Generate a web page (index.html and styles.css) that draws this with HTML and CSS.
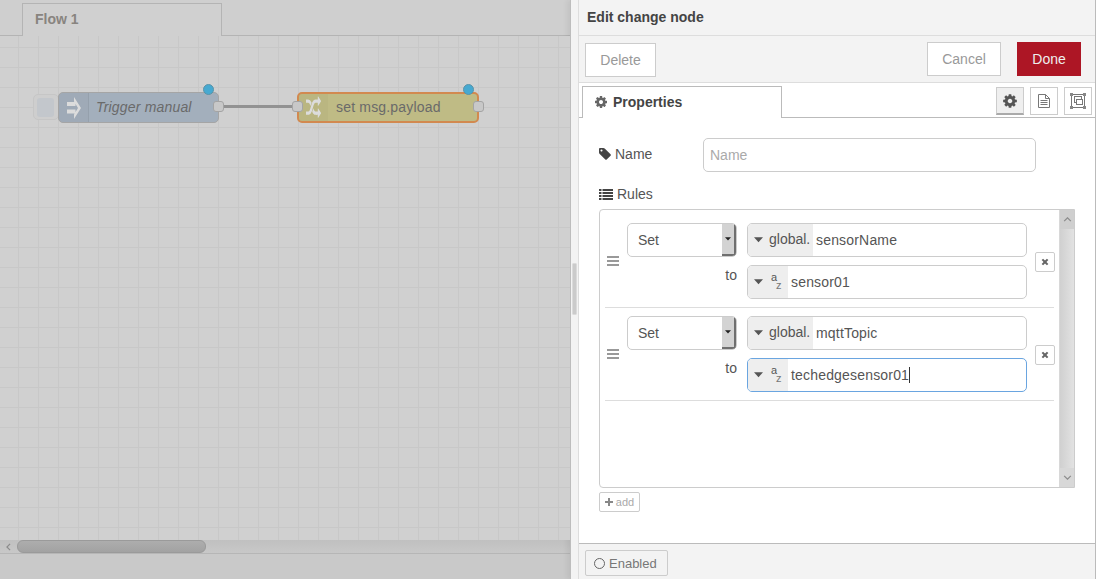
FILE: index.html
```html
<!DOCTYPE html>
<html lang="en">
<head>
<meta charset="utf-8">
<title>Edit change node</title>
<link rel="stylesheet" href="styles.css">
</head>
<body>
<svg class="defs" width="0" height="0" aria-hidden="true">
  <symbol id="i-cog" viewBox="0 0 1792 1792"><path d="M1152 896q0-106-75-181t-181-75-181 75-75 181 75 181 181 75 181-75 75-181zm512-109v222q0 12-8 23t-20 13l-185 28q-19 54-39 91 35 50 107 138 10 12 10 25t-9 23q-27 37-99 108t-94 71q-12 0-26-9l-138-108q-44 23-91 38-16 136-29 186-7 28-36 28h-222q-14 0-24.5-8.5t-11.5-21.5l-28-184q-49-16-90-37l-141 107q-10 9-25 9-14 0-25-11-126-114-165-168-7-10-7-23 0-12 8-23 15-21 51-66.5t54-70.5q-27-50-41-99l-183-27q-13-2-21-12.5t-8-23.5v-222q0-12 8-23t19-13l186-28q14-46 39-92-40-57-107-138-10-12-10-24 0-10 9-23 26-36 98.5-107.5t94.5-71.5q13 0 26 10l138 107q44-23 91-38 16-136 29-186 7-28 36-28h222q14 0 24.5 8.5t11.5 21.5l28 184q49 16 90 37l142-107q9-9 24-9 13 0 25 10 129 119 165 170 7 8 7 22 0 12-8 23-15 21-51 66.5t-54 70.5q26 50 41 98l183 28q13 2 21 12.5t8 23.5z"/></symbol>
  <symbol id="i-caret" viewBox="0 0 10 6"><path d="M0 0h10L5 5.500z"/></symbol>
  <symbol id="i-x" viewBox="0 0 10 10"><path d="M.8 2.600 2.600.8 5 3.200 7.400.8l1.800 1.800L6.800 5l2.400 2.400-1.800 1.800L5 6.800 2.600 9.200.8 7.400 3.200 5z"/></symbol>
  <symbol id="i-bars" viewBox="0 0 12 10"><path d="M0 0h12v2H0zM0 4h12v2H0zM0 8h12v2H0z"/></symbol>
</svg>

<div class="app">
  <section class="canvas">
    <div class="tabstrip">
      <div class="flowtab">Flow 1</div>
    </div>
    <div class="workspace">
      <div class="wire"></div>

      <div class="inject-btn"><span class="inject-btn-inner"></span></div>
      <div class="node node-inject">
        <span class="node-icon">
          <svg viewBox="0 0 14 22" width="14" height="22"><path class="ico-white" d="M0 5h8.500v4H0zM0 12.500h8.500v4H0zM7 0l7 11-7 11v-4.500l4-6.500-4-6.500z"/></svg>
        </span>
        <span class="node-label node-label-italic">Trigger manual</span>
      </div>
      <span class="port port-inject-out"></span>
      <span class="dot dot-inject"></span>

      <div class="node node-change">
        <span class="node-icon">
          <svg viewBox="0 0 1792 1792" width="15" height="24" preserveAspectRatio="none"><path class="ico-white" d="M666 481q-60 92-137 273-22-45-37-72.5t-40.5-63.5-51-56.5-63-35-81.5-14.500h-224q-14 0-23-9t-9-23v-192q0-14 9-23t23-9h224q250 0 410 225zm1126 799q0 14-9 23l-320 320q-9 9-23 9-13 0-22.500-9.500t-9.500-22.500v-192q-32 0-85 .5t-81 1-73-1-71-5-64-10.500-63-18.500-58-28.500-59-40-55-53.500-56-69.500q59-93 136-273 22 45 37 72.500t40.500 63.500 51 56.500 63 34.500 81.500 14h256v-192q0-14 9-23t23-9q12 0 24 10l319 319q9 9 9 23zm0-896q0 14-9 23l-320 320q-9 9-23 9-13 0-22.500-9.500t-9.500-22.500v-192h-256q-48 0-87 15t-69 45-51 61.500-45 77.500q-32 62-78 171-29 66-49.500 111t-54 105-64 100-74 83-90 68.500-106.500 42-128 16.500h-224q-14 0-23-9t-9-23v-192q0-14 9-23t23-9h224q48 0 87-15t69-45 51-61.500 45-77.500q32-62 78-171 29-66 49.500-111t54-105 64-100 74-83 90-68.500 106.500-42 128-16.500h256v-192q0-14 9-23t23-9q12 0 24 10l319 319q9 9 9 23z"/></svg>
        </span>
        <span class="node-label">set msg.payload</span>
      </div>
      <span class="port port-change-in"></span>
      <span class="port port-change-out"></span>
      <span class="dot dot-change"></span>
    </div>
    <div class="hscroll">
      <span class="hscroll-left"><svg viewBox="0 0 6 10" width="5" height="8"><path class="chev" d="M5 1 1 5l4 4"/></svg></span>
      <span class="hscroll-thumb"></span>
    </div>
    <div class="canvas-foot"></div>
  </section>

  <aside class="tray">
    <div class="tray-grip"><span class="grip-bar"></span></div>
    <div class="tray-main">
      <header class="tray-title">Edit change node</header>
      <div class="tray-actions">
        <button class="btn btn-delete">Delete</button>
        <span class="spacer"></span>
        <button class="btn btn-cancel">Cancel</button>
        <button class="btn btn-done">Done</button>
      </div>
      <div class="tray-tabs">
        <div class="prop-tab"><svg class="prop-tab-ico"><use href="#i-cog"/></svg>Properties</div>
        <span class="spacer"></span>
        <div class="side-tab side-tab-active"><svg class="side-ico-cog"><use href="#i-cog"/></svg></div>
        <div class="side-tab">
          <svg viewBox="0 0 12 14" width="12" height="14"><path class="doc" d="M.5.500h7l4 4v9H.5z"/><path class="doc" d="M7.500.500v4h4M2.500 6.500h7M2.500 8.500h7M2.500 10.500h7"/></svg>
        </div>
        <div class="side-tab">
          <svg viewBox="0 0 16 16" width="16" height="16"><rect class="doc" x="1.500" y="1.500" width="13" height="13"/><rect class="doc" x="4.500" y="3.500" width="7" height="6"/><rect class="doc doc-fill" x="6.500" y="6.500" width="6" height="5"/><path class="corner" d="M0 0h3v3H0zM13 0h3v3h-3zM0 13h3v3H0zM13 13h3v3h-3z"/></svg>
        </div>
      </div>

      <div class="tray-body">
        <div class="form-row">
          <label class="form-label form-label-name">
            <svg class="lbl-ico lbl-ico-tag" viewBox="0 0 1792 1792"><path d="M576 448q0-53-37.500-90.500t-90.500-37.500-90.500 37.500-37.500 90.500 37.500 90.500 90.500 37.500 90.500-37.500 37.500-90.500zm1067 576q0 53-37 90l-491 492q-39 37-91 37-53 0-90-37l-715-716q-38-37-64.500-101t-26.500-117v-416q0-52 38-90t90-38h416q53 0 117 26.500t102 64.500l715 714q37 39 37 91z"/></svg>Name
          </label>
          <input class="name-input" type="text" placeholder="Name">
        </div>
        <div class="rules-label">
          <svg class="lbl-ico lbl-ico-list" viewBox="0 0 14 11"><path d="M0 0h2.500v2H0zM3.500 0H14v2H3.500zM0 3h2.500v2H0zM3.500 3H14v2H3.500zM0 6h2.500v2H0zM3.500 6H14v2H3.500zM0 9h2.500v2H0zM3.500 9H14v2H3.500z"/></svg>Rules
        </div>
        <div class="rules-box">
          <div class="rules-list">
            <div class="rule">
              <svg class="rule-handle"><use href="#i-bars"/></svg>
              <div class="rule-main">
                <div class="rule-line">
                  <div class="sel"><span class="sel-text">Set</span><span class="sel-btn"><svg class="sel-caret"><use href="#i-caret"/></svg></span></div>
                  <div class="typed">
                    <span class="typed-type"><svg class="typed-caret"><use href="#i-caret"/></svg>global.</span>
                    <span class="typed-value typed-value-g">sensorName</span>
                  </div>
                </div>
                <div class="rule-line">
                  <span class="rule-to">to</span>
                  <div class="typed">
                    <span class="typed-type typed-type-s"><svg class="typed-caret"><use href="#i-caret"/></svg><span class="az"><span class="az-a">a</span><span class="az-z">z</span></span></span>
                    <span class="typed-value">sensor01</span>
                  </div>
                </div>
              </div>
              <button class="rule-del"><svg class="rule-del-ico"><use href="#i-x"/></svg></button>
            </div>
            <div class="rule">
              <svg class="rule-handle"><use href="#i-bars"/></svg>
              <div class="rule-main">
                <div class="rule-line">
                  <div class="sel"><span class="sel-text">Set</span><span class="sel-btn"><svg class="sel-caret"><use href="#i-caret"/></svg></span></div>
                  <div class="typed">
                    <span class="typed-type"><svg class="typed-caret"><use href="#i-caret"/></svg>global.</span>
                    <span class="typed-value typed-value-g">mqttTopic</span>
                  </div>
                </div>
                <div class="rule-line">
                  <span class="rule-to">to</span>
                  <div class="typed typed-focus">
                    <span class="typed-type typed-type-s"><svg class="typed-caret"><use href="#i-caret"/></svg><span class="az"><span class="az-a">a</span><span class="az-z">z</span></span></span>
                    <span class="typed-value">techedgesensor01<span class="cursor"></span></span>
                  </div>
                </div>
              </div>
              <button class="rule-del"><svg class="rule-del-ico"><use href="#i-x"/></svg></button>
            </div>
          </div>
          <div class="vscroll">
            <span class="vscroll-btn"><svg viewBox="0 0 10 6" width="9" height="5"><path class="chev" d="m1 5 4-4 4 4"/></svg></span>
            <span class="vscroll-track"></span>
            <span class="vscroll-btn vscroll-btn-low"><svg viewBox="0 0 10 6" width="9" height="5"><path class="chev" d="m1 1 4 4 4-4"/></svg></span>
          </div>
        </div>
        <button class="add-btn"><svg viewBox="0 0 8 8" width="8" height="8"><path class="add-plus" d="M3 0h2v3h3v2H5v3H3V5H0V3h3z"/></svg>add</button>
      </div>

      <footer class="tray-foot">
        <button class="enabled-btn"><span class="ring"></span>Enabled</button>
      </footer>
    </div>
  </aside>
</div>
</body>
</html>
```
FILE: styles.css
```css
* { box-sizing: border-box; }
html, body { margin: 0; padding: 0; height: 100%; }
body {
  background: #fff;
  font-family: "Liberation Sans", Arial, sans-serif;
  font-size: 14px;
  color: #555;
  overflow: hidden;
}
button { font-family: inherit; }
.defs { position: absolute; }
.spacer { flex: 1; }

.app { display: flex; width: 1097px; height: 579px; }

/* Dimmed canvas */
.canvas {
  width: 570px;
  flex: none;
  display: flex;
  flex-direction: column;
  background: #cbcbcb;
  overflow: hidden;
}
.tabstrip {
  height: 36px;
  flex: none;
  background: #cfcfcf;
  border-bottom: 1px solid #b4b4b4;
  padding: 3px 0 0 22px;
}
.flowtab {
  width: 200px;
  height: 33px;
  background: #d0d0d0;
  border: 1px solid #b4b4b4;
  border-bottom: 0;
  padding: 0 0 0 12px;
  line-height: 31px;
  font-weight: bold;
  color: #88847f;
}
.workspace {
  position: relative;
  flex: 1;
  background-color: #d0d0d0;
  background-image:
    linear-gradient(to right, #c8c8c8 1px, transparent 1px),
    linear-gradient(to bottom, #c8c8c8 1px, transparent 1px);
  background-size: 20px 20px;
  background-position: 18px 11px;
}
.wire {
  position: absolute;
  left: 218px;
  top: 69px;
  width: 80px;
  height: 3px;
  background: #929292;
}
.inject-btn {
  position: absolute;
  left: 33px;
  top: 58px;
  width: 26px;
  height: 26px;
  border: 1px solid #c6c6c6;
  border-radius: 5px;
  padding: 3px 0 0 3px;
  background: #cecece;
}
.inject-btn-inner {
  display: block;
  width: 17px;
  height: 19px;
  background: #c3c7cc;
  border-radius: 3px;
}
.node {
  position: absolute;
  top: 56px;
  height: 31px;
  display: flex;
  align-items: center;
  border-radius: 5px;
  overflow: hidden;
}
.node-inject {
  left: 58px;
  width: 161px;
  background: #a3afbc;
  border: 1px solid #a5a5a5;
}
.node-change {
  left: 297px;
  width: 182px;
  background: #bfbb85;
  border: 2px solid #d2894f;
}
.node-icon {
  width: 30px;
  height: 100%;
  flex: none;
  display: flex;
  align-items: center;
  justify-content: center;
  background: rgba(0, 0, 0, 0.025);
  border-right: 1px solid rgba(0, 0, 0, 0.06);
}
.node-change .node-icon { width: 29px; border-right: 0; }
.ico-white { fill: #dcdcdc; }
.node-label {
  padding: 0 0 2px 7px;
  color: #6a6a6a;
  white-space: nowrap;
  letter-spacing: 0.18px;
}
.node-change .node-label { padding-left: 8px; }
.node-label-italic { font-style: italic; }
.port {
  position: absolute;
  top: 65px;
  width: 11px;
  height: 11px;
  background: #c8c8c8;
  border: 1px solid #a4a4a4;
  border-radius: 3px;
}
.port-inject-out { left: 213px; }
.port-change-in { left: 292px; }
.port-change-out { left: 473px; }
.dot {
  position: absolute;
  top: 48px;
  width: 11px;
  height: 11px;
  border-radius: 50%;
  background: #46a9d1;
  border: 1px solid #5a93a8;
}
.dot-inject { left: 203px; }
.dot-change { left: 463px; }

.hscroll {
  height: 14px;
  flex: none;
  display: flex;
  align-items: center;
  background: linear-gradient(#c0c0c0, #c8c8c8);
  border-bottom: 1px solid #b6b6b6;
}
.hscroll-left { width: 17px; display: flex; justify-content: center; }
.hscroll-thumb {
  width: 189px;
  height: 13px;
  background: linear-gradient(#adadad, #a2a2a2);
  border: 1px solid #9a9a9a;
  border-radius: 6px;
}
.chev { fill: none; stroke: #8c8c8c; stroke-width: 1.500; }
.canvas-foot { height: 25px; flex: none; background: #c9c9c9; }

/* Tray */
.tray {
  flex: 1;
  display: flex;
  min-width: 0;
  border-left: 1px solid #bdbdbd;
  padding-right: 1px;
  background: #fff;
  box-shadow: -3px 0 5px rgba(0, 0, 0, 0.06);
}
.tray-grip {
  width: 8px;
  flex: none;
  display: flex;
  align-items: center;
  background: #f3f3f3;
  padding-left: 2px;
  border-right: 1px solid #ddd;
}
.grip-bar {
  width: 3px;
  height: 50px;
  margin-bottom: 1px;
  background: #cbcbcb;
  box-shadow: 0 0 0 0.5px #c4c4c4;
}
.tray-main {
  flex: 1;
  min-width: 0;
  display: flex;
  flex-direction: column;
  border-right: 1px solid #bbb;
}
.tray-title {
  height: 36px;
  flex: none;
  background: #f3f3f3;
  border-bottom: 1px solid #ddd;
  padding: 0 0 0 8px;
  line-height: 35px;
  font-weight: bold;
  color: #444;
}
.tray-actions {
  height: 47px;
  flex: none;
  display: flex;
  align-items: flex-start;
  background: #f3f3f3;
  border-bottom: 1px solid #ddd;
  padding: 6px 14px 0 6px;
}
.btn {
  height: 34px;
  border: 1px solid #ccc;
  background: #fff;
  color: #999;
  font-size: 14px;
  padding: 0;
}
.btn-delete { width: 71px; margin-top: 1px; }
.btn-cancel { width: 74px; margin-right: 16px; }
.btn-done { width: 64px; background: #ad1625; border-color: #ad1625; color: #eee; }

.tray-tabs {
  height: 35px;
  flex: none;
  display: flex;
  align-items: flex-start;
  background: #fff;
  border-bottom: 1px solid #bbb;
  padding: 3px 3px 0 3px;
}
.prop-tab {
  width: 200px;
  height: 32px;
  display: flex;
  align-items: center;
  gap: 5px;
  padding: 0 0 2px 11px;
  background: #fff;
  border: 1px solid #bbb;
  border-bottom: 0;
  font-weight: bold;
  color: #444;
  margin-bottom: -1px;
}
.prop-tab-ico { width: 14px; height: 14px; fill: #666; }
.side-tab {
  width: 28px;
  height: 28px;
  margin: 1px 0 0 6px;
  flex: none;
  display: flex;
  align-items: center;
  justify-content: center;
  border: 1px solid #ccc;
  background: #fff;
}
.side-tab-active {
  margin-left: 0;
  background: #efefef;
  border-bottom: 2px solid #aaa;
}
.side-ico-cog { width: 16px; height: 16px; fill: #555; }
.doc { fill: none; stroke: #777; stroke-width: 1; }
.doc-fill { fill: #fff; }
.corner { fill: #888; }

.tray-body {
  flex: 1;
  min-height: 0;
  background: #fff;
  padding: 20px 0 0 20px;
  display: flex;
  flex-direction: column;
  align-items: flex-start;
}
.form-row { display: flex; align-items: center; height: 34px; }
.form-label { display: flex; align-items: center; width: 104px; color: #555; }
.form-label-name { position: relative; top: -1px; }
.lbl-ico { width: 14px; height: 14px; fill: #444; margin-right: 2px; }
.lbl-ico-tag { margin-left: -1px; margin-right: 3px; }
.lbl-ico-list { height: 11px; margin-right: 4px; }
.name-input {
  width: 333px;
  height: 34px;
  border: 1px solid #ccc;
  border-radius: 5px;
  padding: 0 6px;
  font: 14px "Liberation Sans", Arial, sans-serif;
  color: #555;
  outline: 0;
}
.name-input::placeholder { color: #aaa; }
.rules-label { display: flex; align-items: center; height: 16px; margin-top: 14px; }

.rules-box {
  width: 476px;
  height: 279px;
  margin-top: 7px;
  display: flex;
  border: 1px solid #ccc;
  border-radius: 4px 0 0 4px;
  overflow: hidden;
}
.rules-list { flex: 1; min-width: 0; padding: 0 5px; }
.rule {
  display: flex;
  align-items: center;
  border-bottom: 1px solid #ddd;
  padding: 13px 0 8px;
  height: 98px;
}
.rule + .rule { height: 93px; padding: 8px 0 8px; }
.rule-handle { width: 12px; height: 10px; fill: #999; flex: none; margin: 0 0 0 2px; }
.rule-main {
  width: 400px;
  margin-left: 8px;
  display: flex;
  flex-direction: column;
  gap: 8px;
  flex: none;
}
.rule-line { display: flex; justify-content: space-between; align-items: flex-start; }
.sel {
  width: 110px;
  height: 34px;
  display: flex;
  border: 1px solid #ccc;
  border-radius: 5px;
  background: #fff;
  overflow: hidden;
}
.sel-text { flex: 1; line-height: 32px; padding-left: 10px; color: #555; }
.sel-btn {
  width: 14px;
  display: flex;
  align-items: center;
  justify-content: center;
  background: #d3d3d3;
  border-right: 2px solid #6f6f6f;
  border-bottom: 2px solid #6f6f6f;
}
.sel-caret { width: 6px; height: 4px; fill: #222; }
.rule-to { margin: 2px 0 0 auto; line-height: 16px; }
.typed {
  width: 280px;
  height: 34px;
  margin-left: 10px;
  display: flex;
  flex: none;
  border: 1px solid #ccc;
  border-radius: 5px;
  overflow: hidden;
}
.typed-focus { border-color: #6aa5e0; }
.typed-type {
  height: 100%;
  width: 65px;
  flex: none;
  display: flex;
  align-items: center;
  padding-left: 6px;
  background: #eee;
  color: #555;
  position: relative;
  padding-bottom: 2px;
}
.typed-type-s { width: 40px; }
.typed-caret { width: 9px; height: 6px; fill: #555; margin-right: 6px; flex: none; margin-top: 2px; }
.az { position: relative; width: 12px; height: 20px; display: block; font-size: 11px; line-height: 10px; }
.az-a { position: absolute; left: 2px; top: 1px; }
.az-z { position: absolute; left: 7px; top: 9px; color: #777; }
.typed-value {
  padding-left: 3px;
  line-height: 32px;
  color: #555;
  white-space: nowrap;
  letter-spacing: 0.18px;
}
.typed-value-g { padding-left: 3px; }
.cursor {
  display: inline-block;
  width: 1px;
  height: 16px;
  background: #333;
  vertical-align: -3px;
}
.rule-del {
  width: 20px;
  height: 20px;
  margin: 1px 0 0 8px;
  padding: 0;
  flex: none;
  border: 1px solid #ccc;
  border-radius: 2px;
  background: #fff;
  display: flex;
  align-items: center;
  justify-content: center;
}
.rule-del-ico { width: 8px; height: 8px; fill: #666; }
.vscroll {
  width: 15px;
  flex: none;
  display: flex;
  flex-direction: column;
  border-left: 1px solid #d8d8d8;
  background: #d6d6d6;
}
.vscroll-btn {
  height: 19px;
  flex: none;
  display: flex;
  align-items: center;
  justify-content: center;
  background: #cfcfcf;
}
.vscroll-btn-low { background: #d8d8d8; }
.vscroll-track { flex: 1; background: linear-gradient(to right, #d0d0d0, #e2e2e2); }

.add-btn {
  width: 41px;
  height: 20px;
  margin-top: 4px;
  padding: 0;
  display: flex;
  align-items: center;
  justify-content: center;
  gap: 3px;
  border: 1px solid #ccc;
  border-radius: 2px;
  background: #fff;
  color: #aaa;
  font-size: 11px;
}
.add-plus { fill: #888; }

.tray-foot {
  height: 36px;
  flex: none;
  background: #f3f3f3;
  border-top: 1px solid #bbb;
  padding: 6px 0 0 6px;
}
.enabled-btn {
  width: 83px;
  height: 26px;
  padding: 0 0 0 8px;
  display: flex;
  align-items: center;
  gap: 4px;
  border: 1px solid #ccc;
  border-radius: 2px;
  background: #f3f3f3;
  color: #777;
  font-size: 13px;
}
.ring {
  width: 11px;
  height: 11px;
  border: 1px solid #666;
  border-radius: 50%;
  flex: none;
}
```
